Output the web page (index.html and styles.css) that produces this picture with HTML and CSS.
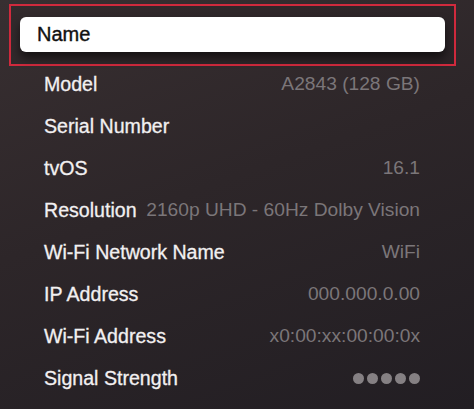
FILE: index.html
```html
<!DOCTYPE html>
<html lang="en">
<head>
  <meta charset="UTF-8" />
  <title>About</title>
  <link rel="stylesheet" href="styles.css">
</head>
<body>
  <div class="tela">
    <div class="destaque">
      <div class="item-nome">Name</div>
    </div>

    <div class="lista-info">
      <div class="linha"><span class="rotulo">Model</span><span class="valor">A2843 (128 GB)</span></div>
      <div class="linha"><span class="rotulo">Serial Number</span><span class="valor"></span></div>
      <div class="linha"><span class="rotulo">tvOS</span><span class="valor">16.1</span></div>
      <div class="linha"><span class="rotulo">Resolution</span><span class="valor">2160p UHD - 60Hz Dolby Vision</span></div>
      <div class="linha"><span class="rotulo">Wi-Fi Network Name</span><span class="valor">WiFi</span></div>
      <div class="linha"><span class="rotulo">IP Address</span><span class="valor">000.000.0.00</span></div>
      <div class="linha"><span class="rotulo">Wi-Fi Address</span><span class="valor">x0:00:xx:00:00:0x</span></div>
      <div class="linha">
        <span class="rotulo">Signal Strength</span>
        <span class="sinal">
          <i></i><i></i><i></i><i></i><i></i>
        </span>
      </div>
    </div>
  </div>
</body>
</html>
```

FILE: styles.css
```css
* {
  box-sizing: border-box;
}

body {
  margin: 0;
  font-family: 'Liberation Sans', Arial, sans-serif;
  background: #29242a;
}

.tela {
  width: 474px;
  height: 409px;
  overflow: hidden;
  padding-top: 4px;
  background: linear-gradient(160deg, #382f31 0%, #2d2629 45%, #221e23 100%);
}

/* caixa vermelha em volta do item selecionado */
.destaque {
  margin-left: 9px;
  width: 447px;
  height: 62px;
  border: 2px solid #d02a3d;
  padding: 11px 9px 0 9px;
  background: rgba(0, 0, 0, 0.08);
}

.item-nome {
  height: 35px;
  background: #ffffff;
  border-radius: 6px;
  box-shadow: 0 6px 10px rgba(0, 0, 0, 0.55);
  padding-left: 17px;
  display: flex;
  align-items: center;
  font-size: 20px;
  color: #111;
  -webkit-text-stroke: 0.4px #111;
}

.lista-info {
  margin-top: -3px;
}

.linha {
  height: 42px;
  display: flex;
  justify-content: space-between;
  align-items: center;
  padding: 0 54px 0 44px;
}

.rotulo {
  font-size: 19.6px;
  color: #f2f0f1;
  -webkit-text-stroke: 0.3px #f2f0f1;
  white-space: nowrap;
}

.valor {
  font-size: 19.2px;
  color: #7b7679;
  white-space: nowrap;
}

.sinal {
  display: flex;
  gap: 3px;
}

.sinal i {
  width: 11px;
  height: 11px;
  border-radius: 50%;
  background: #858083;
}
```
